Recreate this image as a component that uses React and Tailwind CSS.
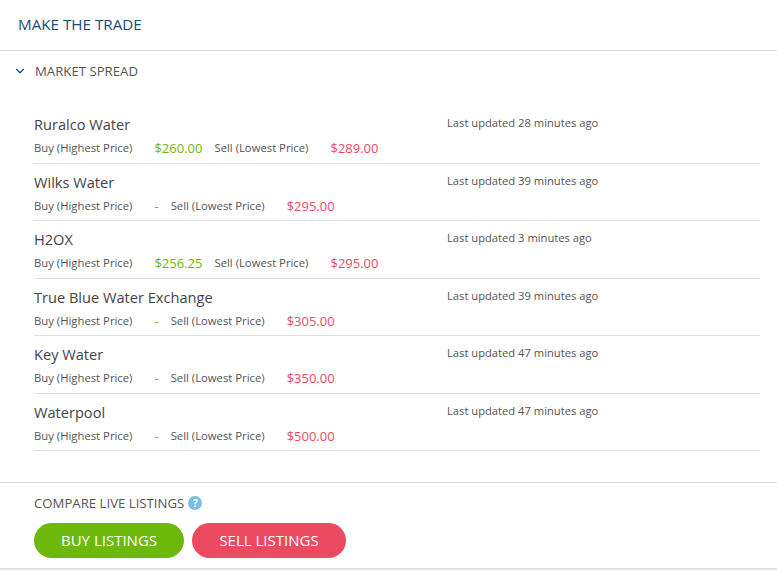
import { ChevronDown } from 'lucide-react';

const markets = [
  { name: 'Ruralco Water', buy: '$260.00', sell: '$289.00', updated: '28 minutes ago' },
  { name: 'Wilks Water', buy: null, sell: '$295.00', updated: '39 minutes ago' },
  { name: 'H2OX', buy: '$256.25', sell: '$295.00', updated: '3 minutes ago' },
  { name: 'True Blue Water Exchange', buy: null, sell: '$305.00', updated: '39 minutes ago' },
  { name: 'Key Water', buy: null, sell: '$350.00', updated: '47 minutes ago' },
  { name: 'Waterpool', buy: null, sell: '$500.00', updated: '47 minutes ago' },
];

function MarketRow({ market }) {
  return (
    <div className="flex border-b border-[#dddddd] pt-[8px] pb-[6.5px]">
      <div className="w-[413px]">
        <div className="text-[14.6px] leading-[20px] text-[#444]">{market.name}</div>
        <div className="mt-[6px] flex items-center text-[11.3px] leading-[16px] text-[#555]">
          <span>Buy (Highest Price)</span>
          <span className="ml-[22px] text-[13px] text-[#6cb80e]">{market.buy || '-'}</span>
          <span className="ml-[12px]">Sell (Lowest Price)</span>
          <span className="ml-[22px] text-[13px] text-[#ee4a66]">{market.sell}</span>
        </div>
      </div>
      <div className="pt-[1px] text-[11.2px] leading-[16px] text-[#555]">
        Last updated {market.updated}
      </div>
    </div>
  );
}

export default function App() {
  return (
    <div className="w-[777px] h-[571px] bg-white font-['Open_Sans',sans-serif]">
      {/* Header */}
      <div className="flex h-[51px] items-center border-b border-[#dcdcdc] pl-[18px] pb-[2px]">
        <h1 className="text-[15.2px] text-[#1a4a78]">MAKE THE TRADE</h1>
      </div>

      {/* Market Spread */}
      <div className="flex items-center gap-[8px] pl-[13px] pt-[11px]">
        <ChevronDown className="h-[14px] w-[14px] text-[#1a4a78]" strokeWidth={2} />
        <span className="text-[13.2px] leading-[18px] text-[#555]">MARKET SPREAD</span>
      </div>

      <div className="ml-[34px] mr-[17px] mt-[26px]">
        {markets.map((m) => (
          <MarketRow key={m.name} market={m} />
        ))}
      </div>

      {/* Compare Live Listings */}
      <div className="mt-[31px] border-t border-[#dcdcdc] border-b-2 border-b-[#e2e2e2] pl-[34px] pt-[11px] pb-[10px]">
        <div className="flex items-center gap-[4px]">
          <span className="text-[13.2px] leading-[18px] text-[#555]">COMPARE LIVE LISTINGS</span>
          <span className="flex h-[14px] w-[14px] items-center justify-center rounded-full bg-[#7cbde2] text-[10px] font-bold leading-none text-white">
            ?
          </span>
        </div>
        <div className="mt-[11px] flex gap-[8px]">
          <button className="h-[35px] w-[150px] rounded-full bg-[#6cb90c] text-[15px] text-white">
            BUY LISTINGS
          </button>
          <button className="h-[35px] w-[154px] rounded-full bg-[#ec4a60] text-[15px] text-white">
            SELL LISTINGS
          </button>
        </div>
      </div>
    </div>
  );
}
